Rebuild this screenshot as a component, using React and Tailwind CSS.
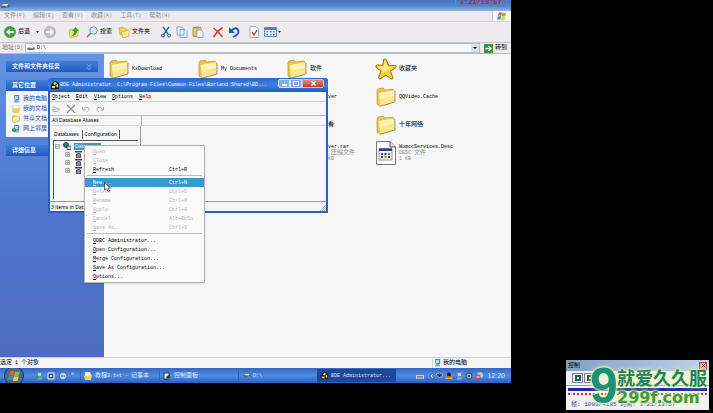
import { Fragment } from 'react';

const MENUS = ['文件(F)', '编辑(E)', '查看(V)', '收藏(A)', '工具(T)', '帮助(H)'];

const PLACES = [
  { label: '我的电脑', icon: 'pc' },
  { label: '我的文档', icon: 'doc' },
  { label: '共享文档', icon: 'folder' },
  { label: '网上邻居', icon: 'net' },
];

const FILES = [
  { name: 'KxDownload', icon: 'folder', cell: 'col-start-1 row-start-1' },
  { name: 'My Documents', icon: 'folder', cell: 'col-start-2 row-start-1' },
  { name: '软件', icon: 'folder', cell: 'col-start-3 row-start-1' },
  { name: '收藏夹', icon: 'star', cell: 'col-start-4 row-start-1' },
  { name: 'Foxserver', icon: 'folder', cell: 'col-start-3 row-start-2' },
  { name: 'QQVideo.Cache', icon: 'folder', cell: 'col-start-4 row-start-2' },
  { name: '超级查看', icon: 'folder', cell: 'col-start-3 row-start-3' },
  { name: '十年网络', icon: 'folder', cell: 'col-start-4 row-start-3' },
  { name: 'Foxserver.rar', icon: 'file', kind: 'WinRAR 压缩文件', size: '1,024 KB', cell: 'col-start-3 row-start-4' },
  { name: 'WomccServices.Desc', icon: 'file', kind: 'DESC 文件', size: '1 KB', cell: 'col-start-4 row-start-4' },
];

const CONTEXT_MENU = [
  [
    { label: 'Open', off: true },
    { label: 'Close', off: true },
    { label: 'Refresh', keys: 'Ctrl+R' },
  ],
  [
    { label: 'New...', keys: 'Ctrl+N', active: true },
    { label: 'Delete', keys: 'Ctrl+D', off: true },
    { label: 'Rename', keys: 'Ctrl+M', off: true },
    { label: 'Apply', keys: 'Ctrl+A', off: true },
    { label: 'Cancel', keys: 'Alt+BkSp', off: true },
    { label: 'Save As..', keys: 'Ctrl+S', off: true },
  ],
  [
    { label: 'ODBC Administrator...' },
    { label: 'Open Configuration...' },
    { label: 'Merge Configuration...' },
    { label: 'Save As Configuration...' },
    { label: 'Options...' },
  ],
];

function Mixed({ text }) {
  return text.split(/([\x20-\x7e]+)/).map((part, i) =>
    i % 2 ? (
      <span key={i} className="text-[5px] whitespace-pre">
        {part}
      </span>
    ) : (
      part
    )
  );
}

function FolderIcon({ className }) {
  return (
    <svg viewBox="0 0 20 20" className={className}>
      <path d="M1 4 2 2 7 1 9 3 17 2 18 4V15L4 19 1 17Z" fill="#e9c64b" stroke="#b08a2a" strokeWidth=".6" />
      <path d="M3 6 18 3.500V15L4 19Z" fill="#f9e88c" />
      <path d="M3 6 18 3.500V9L3.500 12Z" fill="#fdf4b4" />
      <path d="M18 3.500 19 4.500V15L4 19.400" fill="none" stroke="#8d7432" strokeWidth=".7" />
    </svg>
  );
}

function StarIcon() {
  return (
    <svg viewBox="0 0 24 24" className="size-6">
      <path d="M9.500 1.500Q11 .500 12.500 2L15 8.500 22.500 8Q24 9 22.500 10.500L17 14.500 19.500 21.500Q19.500 23.500 17.500 23L12 18.500 5.500 23Q3.500 23 4 21L6.500 14.500 1 10Q.500 8 2.500 7.500L8.500 8Z" fill="#f8d030" stroke="#8a6212" strokeWidth="1" strokeLinejoin="round" />
      <path d="M10.500 3 13.500 9.500 20 9.500 14 13 9 16 8 13 3.500 9.500 9.500 9.500Z" fill="#fff07c" />
    </svg>
  );
}

function FileIcon() {
  return (
    <svg viewBox="0 0 20 24" className="h-6 w-5">
      <path d="M.5.500H14L19.500 6V23.500H.5Z" fill="#fdfdfd" stroke="#777" />
      <path d="M14 .5V6H19.500" fill="#ddd" stroke="#555" />
      <path d="M3 7.500H16V19H3Z" fill="#f4f4f4" stroke="#555" strokeWidth=".6" />
      <path d="M3 7.500H16V10H3Z" fill="#2b3f9a" />
      <path d="M5 12h2v2H5zM12 15h2v2h-2z" fill="#7a2456" />
      <path d="M8.500 12h2v2h-2zM5 15h2v2H5z" fill="#27368c" />
      <path d="M12 12h2v2h-2zM8.500 15h2v2h-2z" fill="#8c8030" />
    </svg>
  );
}

function PlaceIcon({ name }) {
  if (name === 'folder') return <FolderIcon className="size-2" />;
  if (name === 'doc')
    return (
      <svg viewBox="0 0 8 8" className="size-2">
        <path d="M1 0H6L7 2V6H1Z" fill="#fff" stroke="#8d98a8" strokeWidth=".5" />
        <path d="M0 4 8 3 7 8H1Z" fill="#efce5d" />
      </svg>
    );
  return (
    <svg viewBox="0 0 8 8" className="size-2">
      <path d="M2 0H7V5L3 6Z" fill="#3d87d8" stroke="#89a" strokeWidth=".5" />
      <path d="M3 1H6V4L3 4.500Z" fill="#a9dcff" />
      <path d="M2 6 7 5.500V7.500H2Z" fill="#9aa9b8" />
      {name === 'net' && <circle cx="2" cy="5" r="2" fill="#2f9a6a" />}
    </svg>
  );
}

function DriveIcon({ className }) {
  return (
    <svg viewBox="0 0 10 6" className={className}>
      <path d="M0 3 3 1H9L10 3 8 5H2Z" fill="#59636b" />
      <path d="M1 2.500 3.500 1H8.500L7 3Z" fill="#dfe5e5" />
      <path d="M6 3.500h2v1H6z" fill="#4cc36a" />
    </svg>
  );
}

function Flag({ className }) {
  return (
    <svg viewBox="0 0 12 12" className={className}>
      <path d="M2 2Q4 1 6 2L5 6Q3 5 1 6Z" fill="#ee5b2d" />
      <path d="M6.500 2Q9 3 11 2L10 6Q8 7 5.500 6Z" fill="#7fc241" />
      <path d="M1 6.500Q3 5.500 5 6.500L4 10.500Q2 9.500 0 10.500Z" fill="#3c8fe0" />
      <path d="M5.500 6.500Q8 7.500 10 6.500L9 10.500Q7 11.500 4.500 10.500Z" fill="#fbc92c" />
    </svg>
  );
}

function BdeIcon({ className }) {
  return (
    <svg viewBox="0 0 9 9" className={className}>
      <path d="M1 2 4 0 8 2V8H0V4Z" fill="#171a15" />
      <path d="M2 3 4 1 6 2 4 4ZM1 5H4V7H1Z" fill="#f0df27" />
      <path d="M5 4 7 3V6L6 7Z" fill="#d6e06a" />
    </svg>
  );
}

function TitleBar() {
  return (
    <header className="flex h-[11px] items-center overflow-hidden bg-linear-to-b from-[#4674bd] via-[#5084cf] to-[#8bb7ea] pr-1">
      <DriveIcon className="h-[6px] w-[10px]" />
      <time className="ml-auto h-[7px] self-start border border-t-0 border-[#6a86b4] px-1 font-['Liberation_Mono'] text-[7px] leading-[5px] font-bold text-[#d8174b]">
        3:21/13:57
      </time>
    </header>
  );
}

function Toolbar() {
  return (
    <div className="flex h-[21px] items-center border-b border-[#c6c3c6] bg-[#eeebee] pl-1 whitespace-nowrap">
      <button className="flex w-[33px] shrink-0 items-center gap-[2px]">
        <svg viewBox="0 0 12 12" className="size-3 shrink-0">
          <circle cx="6" cy="6" r="5.500" fill="#38a634" stroke="#23801f" strokeWidth=".6" />
          <path d="M2 6 6 2.500V5H10V7H6V9.500Z" fill="#fff" />
        </svg>
        后退
        <svg viewBox="0 0 4 2" className="ml-1 h-[2px] w-[3px] shrink-0"><path d="M0 0H4L2 2Z" /></svg>
      </button>
      <button className="ml-[7px]" aria-label="前进">
        <svg viewBox="0 0 12 12" className="size-3">
          <circle cx="6" cy="6" r="5.500" fill="#c4c2c4" stroke="#979597" strokeWidth=".6" />
          <path d="M10 6 6 2.500V5H2V7H6V9.500Z" fill="#fff" />
        </svg>
      </button>
      <button className="ml-3" aria-label="向上">
        <svg viewBox="0 0 12 12" className="size-3">
          <path d="M1 4 3 3 5 4 10 3V10L2 12Z" fill="#f5df70" stroke="#b6963c" strokeWidth=".5" />
          <path d="M3 10Q6 9 6 5H4L7.500 1 11 5H9Q9 10 3 10Z" fill="#35a52f" />
        </svg>
      </button>
      <button className="ml-[6px] flex items-center gap-[2px]">
        <svg viewBox="0 0 12 12" className="size-3">
          <path d="M1 11 5 7" stroke="#b3835a" strokeWidth="1.800" />
          <circle cx="7.500" cy="4.500" r="3.700" fill="#c9e9fa" stroke="#7796b9" />
        </svg>
        搜索
      </button>
      <button className="ml-[6px] flex items-center gap-[2px]">
        <svg viewBox="0 0 12 12" className="size-3">
          <path d="M1 2 5 1 7 3 9 3V8L2 9Z" fill="#f0cf51" stroke="#b38f30" strokeWidth=".5" />
          <path d="M3 6 11 4V10L5 12Z" fill="#fbea8d" stroke="#b38f30" strokeWidth=".5" />
        </svg>
        文件夹
      </button>
      <button className="ml-[10px]" aria-label="剪切">
        <svg viewBox="0 0 12 12" className="size-3" fill="none" stroke="#2862b4">
          <path d="M3 1 8 8M9 1 4 8" strokeWidth="1.300" />
          <circle cx="3" cy="9.500" r="1.500" /><circle cx="9" cy="9.500" r="1.500" />
        </svg>
      </button>
      <button className="ml-1" aria-label="复制">
        <svg viewBox="0 0 12 12" className="size-3" fill="#e5f1ff" stroke="#6c93cf" strokeWidth=".7">
          <path d="M1 1H6L8 3V9H1ZM4 3.500H9L11 5.500V11.500H4Z" />
        </svg>
      </button>
      <button className="ml-1" aria-label="粘贴">
        <svg viewBox="0 0 12 12" className="size-3" strokeWidth=".7">
          <path d="M1 1.500H9V10.500H1Z" fill="#e9c861" stroke="#927c35" />
          <path d="M3 .500H7V2.500H3Z" fill="#999" />
          <path d="M5 4H9L11 6V11.500H5Z" fill="#f0f6ff" stroke="#6c93cf" />
        </svg>
      </button>
      <button className="ml-2" aria-label="删除">
        <svg viewBox="0 0 12 12" className="size-3"><path d="M1.500 2Q6 5 10.500 11M10.500 1.500Q5 5 1.500 11" fill="none" stroke="#e23420" strokeWidth="1.500" /></svg>
      </button>
      <button className="ml-1" aria-label="撤消">
        <svg viewBox="0 0 12 12" className="size-3">
          <path d="M3 5Q8 0 10 4T5 11" fill="none" stroke="#1c55bd" strokeWidth="1.900" />
          <path d="M1 1V7H7Z" fill="#1c55bd" />
        </svg>
      </button>
      <button className="ml-2" aria-label="属性">
        <svg viewBox="0 0 12 12" className="size-3">
          <path d="M2 .500H8L10.500 3V11.500H2Z" fill="#fafcff" stroke="#7c9acb" strokeWidth=".7" />
          <path d="M4 6 6 9 9 4" fill="none" stroke="#dd3d2a" strokeWidth="1.400" />
        </svg>
      </button>
      <button className="ml-1 flex items-center gap-[1px]" aria-label="视图">
        <svg viewBox="0 0 13 12" className="h-3 w-[13px]">
          <path d="M.5 1.500H12.500V10.500H.5Z" fill="#fff" stroke="#6286bd" />
          <path d="M1 2H12V4H1Z" fill="#4a7cd4" />
          <path d="M2.500 5h1.500v1.500H2.500zM9 5h1.500v1.500H9zM6 8h1.500v1.500H6z" fill="#2e9a57" />
          <path d="M6 5h1.500v1.500H6zM2.500 8h1.500v1.500H2.500zM9 8h1.500v1.500H9z" fill="#2e61b4" />
        </svg>
        <svg viewBox="0 0 4 2" className="h-[2px] w-[3px]"><path d="M0 0H4L2 2Z" /></svg>
      </button>
    </div>
  );
}

function AddressBar() {
  return (
    <div className="flex h-[11px] items-center border-b border-[#bdbabd] bg-[#eeebee]">
      <label htmlFor="address" className="w-[25px] pl-[2px] text-[#777]">
        <Mixed text="地址(D)" />
      </label>
      <div className="flex h-[10px] min-w-0 flex-1 items-center border border-[#aebfce] bg-[#f9f9f9] pl-[1px]">
        <DriveIcon className="h-[5px] w-2 shrink-0" />
        <input id="address" defaultValue="D:\" className="ml-[2px] h-2 min-w-0 flex-1 bg-transparent font-['Liberation_Mono'] text-[5px] outline-none" />
        <button className="flex h-2 w-2 items-center justify-center bg-[#dbe2ee]" aria-label="打开列表">
          <svg viewBox="0 0 4 2" className="h-[2px] w-1"><path d="M0 0H4L2 2Z" /></svg>
        </button>
      </div>
      <button className="flex w-[31px] items-center gap-[2px] pl-1">
        <svg viewBox="0 0 9 9" className="size-[9px]">
          <path d="M0 0H9V9H0Z" fill="#259c35" />
          <path d="M1.500 4.500H7M4.500 2 7 4.500 4.500 7" fill="none" stroke="#fff" strokeWidth="1.300" />
        </svg>
        转到
      </button>
    </div>
  );
}

function SideHeading({ children, chevron }) {
  return (
    <h2 className="flex h-[11px] items-center bg-linear-to-b from-[#3f7ed8] to-[#245bbd] px-[6px] font-bold text-[#e9f2ff]">
      {children}
      {chevron && (
        <svg viewBox="0 0 6 6" className="ml-auto size-[6px]" fill="none" stroke="#b6d4ff" strokeWidth=".8">
          <path d="M1 .500 3 2.500 5 .500M1 3.500 3 5.500 5 3.500" />
        </svg>
      )}
    </h2>
  );
}

function Sidebar() {
  return (
    <aside className="flex w-[104px] shrink-0 flex-col gap-2 bg-linear-to-b from-[#6492e2] via-[#4f76cf] to-[#4f6cbf] px-[6px] pt-[7px]">
      <SideHeading chevron>文件和文件夹任务</SideHeading>
      <section>
        <SideHeading>其它位置</SideHeading>
        <ul className="flex flex-col gap-[2px] bg-[#f3f6fc] px-[6px] py-1">
          {PLACES.map((p) => (
            <li key={p.label}>
              <a href="#" className="flex h-2 items-center gap-[3px] text-[#2853a8]">
                <PlaceIcon name={p.icon} />
                {p.label}
              </a>
            </li>
          ))}
        </ul>
      </section>
      <SideHeading>详细信息</SideHeading>
    </aside>
  );
}

function FileGrid() {
  return (
    <ul className="grid flex-1 auto-rows-[28px] grid-cols-[repeat(4,89px)] content-start overflow-hidden bg-[#f7f7f7] pt-[1px] pl-1">
      {FILES.map((f) => (
        <li key={f.name} className={`flex items-center gap-[2px] ${f.cell}`}>
          <span className="flex w-[22px] shrink-0 justify-center">
            {f.icon === 'folder' && <FolderIcon className="size-5" />}
            {f.icon === 'star' && <StarIcon />}
            {f.icon === 'file' && <FileIcon />}
          </span>
          <div className="leading-[6px] whitespace-nowrap">
            <p><Mixed text={f.name} /></p>
            {f.kind && <p className="text-[#8a8a8a]"><Mixed text={f.kind} /></p>}
            {f.size && <p className="text-[#8a8a8a]"><Mixed text={f.size} /></p>}
          </div>
        </li>
      ))}
    </ul>
  );
}

function TreeNode() {
  return (
    <li className="flex h-2 items-center gap-[5px] pl-[10px]">
      <svg viewBox="0 0 5 5" className="size-[5px]"><path d="M.5.500H4.500V4.500H.5ZM1 2.500H4M2.500 1V4" fill="#fff" stroke="#777" strokeWidth=".6" /></svg>
      <svg viewBox="0 0 7 7" className="size-[7px]">
        <path d="M0 0H7V1.500H0Z" fill="#2c36a0" />
        <path d="M1.500 3Q3.500 2 5.500 3V6.500Q3.500 7.500 1.500 6.500Z" fill="#8994a0" stroke="#222" strokeWidth=".8" />
      </svg>
      <span className="h-1 w-px bg-[#555]" />
    </li>
  );
}

function BdeWindow() {
  return (
    <section className="absolute top-[78px] left-[48px] flex h-[135px] w-[280px] flex-col rounded-t-[3px] border-2 border-t-0 border-[#2c60c6] bg-[#f6f6f6] font-['Noto_Sans'] text-[5px]">
      <header className="-mx-[2px] flex h-[14px] shrink-0 items-center rounded-t-[3px] bg-linear-to-b from-[#2a67cf] via-[#3d82e0] to-[#2458bd] pr-1 pl-[3px]">
        <BdeIcon className="size-[9px]" />
        <h1 className="font-['Liberation_Mono'] leading-2 whitespace-pre text-[#e4efff]">
          {'BDE Administrator  C:\\Program Files\\Common Files\\Borland Shared\\BD...'}
        </h1>
        <div className="ml-auto flex items-center self-start pt-[1px]">
          <button aria-label="Minimize" className="flex h-[9px] w-3 items-end justify-center rounded-l-[2px] border border-[#d5e4fb] bg-[#86abe9] pb-[1px]">
            <span className="h-[2px] w-[5px] bg-white" />
          </button>
          <button aria-label="Maximize" className="flex h-[9px] w-3 items-center justify-center border border-[#d5e4fb] bg-[#7da5e7]">
            <span className="h-[5px] w-[6px] border border-white" />
          </button>
          <button aria-label="Close" className="flex h-[9px] w-[22px] items-center justify-center rounded-r-[2px] border border-[#eab8ae] bg-linear-to-b from-[#e88b75] to-[#c43620]">
            <svg viewBox="0 0 5 5" className="size-[5px]"><path d="M.5.500 4.500 4.500M4.500.500.500 4.500" stroke="#fff" strokeWidth="1.300" /></svg>
          </button>
        </div>
      </header>
      <nav className="flex h-[10px] shrink-0 items-center gap-[6px] border-b border-[#cfcfcf] pl-[2px] font-['Liberation_Mono']">
        {['Object', 'Edit', 'View', 'Options', 'Help'].map((m) => (
          <button key={m} className="first-letter:underline">{m}</button>
        ))}
      </nav>
      <div className="flex h-[14px] shrink-0 items-center gap-[6px] border-b border-[#bbb] pl-[2px]">
        <button aria-label="Open">
          <svg viewBox="0 0 8 8" className="size-2" fill="none" stroke="#aaa" strokeWidth=".8"><path d="M1 6V2H3L4 3H6V4M1 6 2.500 4H8L6 6.500H1Z" /></svg>
        </button>
        <button aria-label="Delete">
          <svg viewBox="0 0 10 10" className="size-[10px]"><path d="M1 1 9 9M9 1 1 9" stroke="#909090" strokeWidth="1.200" /></svg>
        </button>
        <button aria-label="Undo">
          <svg viewBox="0 0 8 8" className="size-2" fill="none" stroke="#aaa"><path d="M.500 2V5H3.500M1 5Q3 1 6 2.500T5 7" /></svg>
        </button>
        <button aria-label="Redo">
          <svg viewBox="0 0 8 8" className="size-2" fill="none" stroke="#aaa"><path d="M7.500 2V5H4.500M7 5Q5 1 2 2.500T3 7" /></svg>
        </button>
      </div>
      <div className="flex h-[10px] shrink-0 gap-[2px] pl-[2px]">
        <p className="w-[87px] border-b border-[#d2d2d2] leading-[9px]">All Database Aliases</p>
        <p className="flex-1 border-b border-l border-[#aaa] border-b-[#d2d2d2]" />
      </div>
      <div className="flex min-h-0 flex-1">
        <div className="flex w-[90px] flex-col pt-[2px] pl-[3px]">
          <div className="flex h-3 items-center" role="tablist">
            <button role="tab" aria-selected="true" className="h-[9px] border-r border-[#555] pr-[3px] pl-[1px]">Databases</button>
            <button role="tab" aria-selected="false" className="h-[9px] border-r border-[#555] px-[2px]">Configuration</button>
          </div>
          <ul className="mr-[2px] mb-[2px] flex-1 border-t border-l border-[#555] pt-[1px] pl-[1px]">
            <li className="flex h-2 items-center gap-[3px]">
              <svg viewBox="0 0 5 5" className="size-[5px]"><path d="M.5.500H4.500V4.500H.5ZM1 2.500H4" fill="#fff" stroke="#777" strokeWidth=".6" /></svg>
              <svg viewBox="0 0 8 8" className="size-2">
                <circle cx="3" cy="3" r="2.500" fill="#2a7e86" stroke="#122" strokeWidth=".7" />
                <path d="M4 4H8V7.500H4Z" fill="#cdd3da" stroke="#223" strokeWidth=".7" />
              </svg>
              <span className="bg-[#3a96d2] px-[1px] leading-[7px] text-white">Databases</span>
            </li>
            <TreeNode />
            <TreeNode />
            <TreeNode />
          </ul>
        </div>
        <div className="flex-1 border-l border-[#999]" />
      </div>
      <footer className="flex h-[10px] shrink-0 items-center border-t border-[#999] pl-[1px]">
        3 items in Data
        <svg viewBox="0 0 6 6" className="mt-auto ml-auto size-[6px]"><path d="M6 0 0 6M6 2 2 6M6 4 4 6" stroke="#999" strokeWidth=".8" /></svg>
      </footer>
    </section>
  );
}

function ContextMenu() {
  return (
    <div role="menu" className="absolute top-[145px] left-[84px] w-[121px] border border-[#b4b4b4] bg-[#fafafa] py-[1px] font-['Liberation_Mono'] text-[5px] shadow-sm">
      {CONTEXT_MENU.map((group, i) => (
        <Fragment key={i}>
          {i > 0 && <hr className="mx-[2px] mt-[1px] mb-[2px] border-[#bcbcbc]" />}
          {group.map((item) => (
            <button
              key={item.label}
              role="menuitem"
              disabled={item.off}
              className={`flex h-[9px] w-full items-center pl-2 text-left ${item.active ? 'bg-[#3a98d2] text-white' : item.off ? 'text-[#b5b5b5]' : 'text-black'}`}
            >
              <span className="flex-1 first-letter:underline">{item.label}</span>
              {item.keys && <span className="w-[35px]">{item.keys}</span>}
            </button>
          ))}
        </Fragment>
      ))}
    </div>
  );
}

function Taskbar() {
  return (
    <footer className="flex h-[15px] items-center overflow-hidden bg-linear-to-b from-[#3566c4] via-[#4f8ae2] to-[#2b60c3] text-[#dbe9ff]">
      <button aria-label="开始" className="ml-1 flex size-[20px] shrink-0 items-center justify-center rounded-full border border-[#15315f] bg-[#47688f]">
        <Flag className="size-[13px]" />
      </button>
      <div className="flex w-[56px] items-center gap-1 pl-[11px]">
        <PlaceIcon name="net" />
        <svg viewBox="0 0 8 8" className="size-2"><path d="M1 1H7V7H1Z" fill="#254f88" stroke="#fff" /><path d="M3 3H5V5H3Z" fill="#fff" /></svg>
        <svg viewBox="0 0 8 8" className="size-2"><circle cx="4" cy="4" r="3" fill="#c8dbf2" /><path d="M2 4H6" stroke="#3667a8" /></svg>
        <span className="mb-1 text-[5px]">»</span>
      </div>
      <button className="flex h-[13px] w-[79px] items-center gap-[3px] border-l border-[#2f66c0] pl-[3px]">
        <PlaceIcon name="doc" />
        <span><Mixed text="教程2.txt - 记事本" /></span>
      </button>
      <button className="flex h-[13px] w-[79px] items-center gap-[3px] border-l border-[#2f66c0] pl-[3px]">
        <svg viewBox="0 0 8 8" className="size-2"><path d="M1 1H6V7H1Z" fill="#e9eef5" stroke="#123" strokeWidth=".8" /><path d="M3 5 7 2V5L4 7Z" fill="#223b60" /></svg>
        控制面板
      </button>
      <button className="flex h-[13px] w-[79px] items-center gap-[2px] border-l border-[#2f66c0] pl-1">
        <DriveIcon className="h-[5px] w-2" />
        <Mixed text="D:\" />
      </button>
      <button className="flex h-[13px] w-[79px] items-center gap-[2px] rounded-[1px] bg-[#1d479b] pl-1">
        <BdeIcon className="size-2" />
        <Mixed text="BDE Administrator..." />
      </button>
      <div className="ml-auto flex items-center gap-[2px] pr-[6px]">
        <svg viewBox="0 0 8 8" className="mr-1 size-2"><path d="M0 3H8V7H0Z" fill="#cdd4db" /><path d="M1 4.500H7M1 6H7" stroke="#444" strokeWidth=".6" /></svg>
        <svg viewBox="0 0 4 6" className="h-[6px] w-1"><path d="M3 1 1 3 3 5" fill="none" stroke="#fff" /></svg>
        <svg viewBox="0 0 7 7" className="size-[7px]"><path d="M0 2 4 1 7 3 3 6Z" fill="#333a3e" stroke="#ddd" strokeWidth=".6" /></svg>
        <svg viewBox="0 0 8 8" className="size-2"><circle cx="4" cy="2.500" r="2" fill="#261c18" /><path d="M0 7Q4 1 8 7Z" fill="#f3b928" /><path d="M2 4H6V5.500H2Z" fill="#e33c27" /></svg>
        <PlaceIcon name="pc" />
        <svg viewBox="0 0 8 8" className="size-2"><circle cx="4" cy="4" r="3" fill="#9ba6ac" stroke="#44505c" /><circle cx="4" cy="4" r="1" fill="#345" /></svg>
        <svg viewBox="0 0 8 8" className="size-2"><circle cx="5" cy="3" r="3" fill="#b9c6d4" /><circle cx="3" cy="5" r="2.500" fill="#e0433d" /><path d="M1.500 5H4.500" stroke="#fff" /></svg>
        <time className="ml-[2px] font-['Liberation_Sans'] text-[7px]">12:20</time>
      </div>
    </footer>
  );
}

function Desktop() {
  return (
    <main className="relative mb-[30px] flex min-w-0 flex-1 flex-col overflow-hidden">
      <TitleBar />
      <nav className="flex h-[11px] items-center gap-2 border-b border-[#d6d3d6] bg-[#eeebee] pl-1 text-[#8b8b8b]">
        {MENUS.map((m) => (
          <button key={m}><Mixed text={m} /></button>
        ))}
        <span className="ml-auto flex h-[10px] w-[19px] items-center justify-center border-l border-[#c9c9c9] bg-[#f9f9f9]">
          <Flag className="size-[10px]" />
        </span>
      </nav>
      <Toolbar />
      <AddressBar />
      <div className="flex min-h-0 flex-1">
        <Sidebar />
        <FileGrid />
      </div>
      <div className="flex h-[11px] items-center border-t border-[#cfcfcf] bg-[#f5f5f5]">
        <p><Mixed text="选定 1 个对象" /></p>
        <p className="ml-auto flex h-[9px] w-[79px] items-center gap-[2px] border-l border-[#d8d8d8]">
          <PlaceIcon name="pc" />
          我的电脑
        </p>
      </div>
      <Taskbar />
      <BdeWindow />
      <ContextMenu />
      <svg viewBox="0 0 7 10" className="absolute top-[182px] left-[104px] h-[10px] w-[7px]">
        <path d="M.5.500V8L2.500 6.500 4 9.500 5.500 9 4 6H6.500Z" fill="#fff" stroke="#222" strokeWidth=".7" />
      </svg>
    </main>
  );
}

function ControlPanel() {
  return (
    <section className="relative mr-1 mb-[3px] ml-[55px] h-[50px] bg-[#f1f1f3]">
      <header className="flex h-[11px] items-center justify-between bg-linear-to-r from-[#7f9fc6] to-[#c0d5ec] px-[2px] text-black">
        控制
        <button aria-label="关闭" className="flex size-2 items-center justify-center border border-[#a44a48] bg-[#d9b3b5]">
          <svg viewBox="0 0 5 5" className="size-[5px]"><path d="M.5.500 4.500 4.500M4.500.500.500 4.500" stroke="#a22" /></svg>
        </button>
      </header>
      <div className="flex gap-[1px] border-b border-[#999] px-[6px] py-[2px]">
        {['播放', '停止'].map((name) => (
          <button key={name} aria-label={name} className="flex h-[10px] w-[11px] items-center justify-center border border-[#879]">
            <span className="size-[6px] border-2 border-[#176458] bg-white" />
          </button>
        ))}
      </div>
      <div className="mx-[2px] mt-[2px] h-[3px] bg-[#1c27a4]" />
      <div className="mx-[2px] mt-[2px] border-t-2 border-dotted border-[#d62e3c]" />
      <p className="mt-[6px] pl-[5px] font-['Liberation_Mono','Noto_Sans_CJK_SC',monospace] text-[6px] leading-2 whitespace-pre text-[#3a36b4]">
        帧: 1080/4185 时间: 3:21/13:57
      </p>
      <div className="absolute top-[7px] left-[24px] flex items-start font-bold [text-shadow:0_0_1px_#e7f79b,0_0_2px_#e7f79b,0_0_3px_#e7f79b,0_0_4px_#e7f79b]">
        <span className="w-[27px] font-['Liberation_Sans'] text-[50px] leading-[38px] text-[#1d8f7a]">9</span>
        <div className="pt-[3px] whitespace-nowrap">
          <p className="text-[18px] leading-[21px] text-[#23806c]">就爱久久服</p>
          <p className="font-['DejaVu_Sans'] text-[16px] leading-[14px] text-[#3b9a50]">299f.com</p>
        </div>
      </div>
    </section>
  );
}

export default function App() {
  return (
    <div className="flex min-h-screen bg-black font-['Liberation_Mono','Noto_Sans_CJK_SC',sans-serif] text-[6px] leading-2 text-black">
      <Desktop />
      <aside className="flex w-[202px] shrink-0 flex-col justify-end">
        <ControlPanel />
      </aside>
    </div>
  );
}
